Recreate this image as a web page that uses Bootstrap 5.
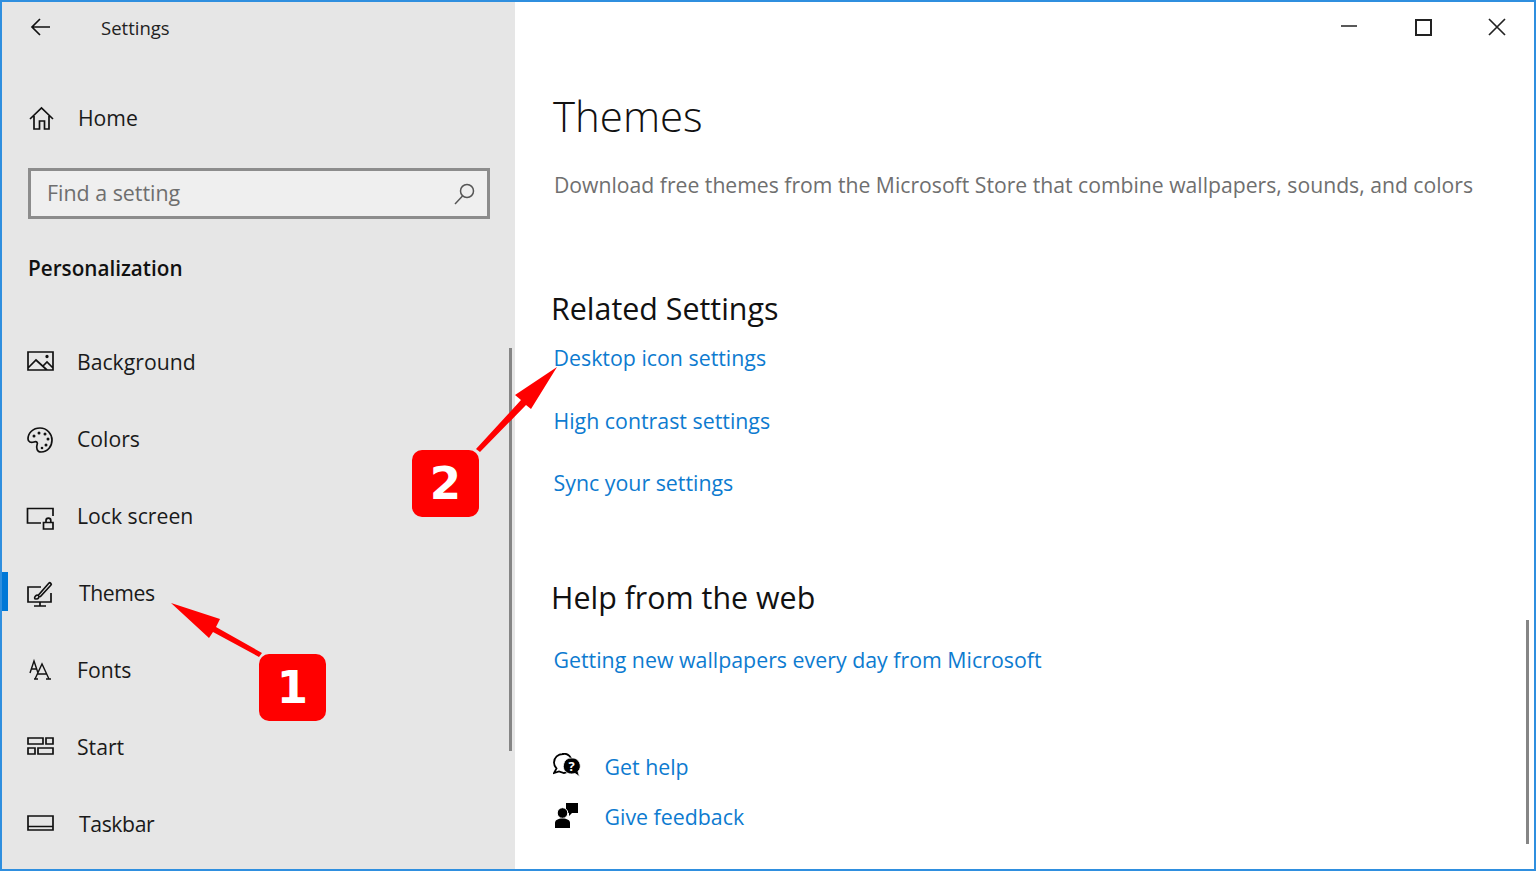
<!DOCTYPE html>
<html lang="en"><head><meta charset="utf-8"><title>Settings</title>
<link href="https://cdn.jsdelivr.net/npm/bootstrap@5.3.0/dist/css/bootstrap.min.css" rel="stylesheet">
<style>
html,body{height:871px;overflow:hidden;background:#fff}
body{font-family:"Open Sans","Noto Sans",sans-serif;color:#1a1a1a}
.win{height:871px;border:2px solid #2f8fdf;position:relative;overflow:hidden}
.side{width:513px;background:#e6e6e6;flex:none;overflow:hidden}
.titlebar{height:52px;padding-left:26px}
.titlebar span{font-size:18.5px;margin-left:45px;color:#222}
.homerow{height:77px;margin-top:26px;padding-left:26px}
.ico{width:28px;height:28px;flex:none;fill:none;stroke:#111;stroke-width:1.7}
.lbl{font-size:21.2px;margin-left:23px;margin-bottom:2px;color:#1a1a1a}
.lbl-wide{margin-left:25px;letter-spacing:-.4px}
.lbl-home{margin-left:22px}
.finder{height:51px;margin:11px 25px 0 26px;border:3px solid #8c8c8c;background:#efefef;padding:0 10px 0 16px}
.finder span{font-size:21.4px;color:#6e6e6e}
.grp{margin:29px 0 0 26px;height:40px;padding-top:2px;font-size:20.7px;font-weight:600;color:#111}
.navlist{margin-top:36px}
.navrow{height:77px;padding-left:24px;position:relative}
.navrow.on::before{content:"";position:absolute;left:-2px;top:17px;width:8px;height:39px;background:#0078d7}
.pane{min-width:0;padding-left:37px;position:relative}
.winctl{height:52px;padding-right:23px;gap:46px}
.winctl svg{width:28px;height:28px;fill:none;stroke:#222;stroke-width:2}
.pagehd{font-size:42px;font-weight:300;color:#111;height:68px;margin:28px 0 0 1px;line-height:68px}
.desc{font-size:21.18px;color:#6f6f6f;margin:19px 0 0 2px;height:32px;line-height:32px;white-space:nowrap}
.sect{font-size:30.4px;font-weight:400;color:#111;height:44px;line-height:44px;margin:0 0 0 -1px}
.lnk{display:block;font-size:21.35px;color:#0d7bd0;text-decoration:none;height:32px;line-height:32px;margin-left:1.5px}
.helprow{height:50px;margin-left:1px}
.helprow svg{width:28px;height:28px;flex:none}
.helprow .lnk{margin-left:23.5px}
.thumb{position:absolute;background:#858585;width:3px}
.tag{position:absolute;width:67px;height:67px;background:#f00;border-radius:10px;color:#fff;font-family:"DejaVu Sans",sans-serif;font-weight:700;font-size:45px;line-height:67px;text-align:center}
.marks{position:absolute;left:-2px;top:-2px;width:1536px;height:871px;pointer-events:none}
</style></head><body>
<div class="win d-flex">
<aside class="side">
 <div class="titlebar d-flex align-items-center">
  <svg class="ico" viewBox="0 0 28 28"><path d="M22 13H4M12 5l-8 8 8 8"/></svg>
  <span>Settings</span>
 </div>
 <div class="homerow d-flex align-items-center">
  <svg class="ico" viewBox="0 0 28 28"><path d="M2 14 13.500 3 25 14M6 11v13h5.500v-8h5v8H21V11"/></svg>
  <span class="lbl lbl-home">Home</span>
 </div>
 <div class="finder d-flex align-items-center justify-content-between">
  <span>Find a setting</span>
  <svg width="26" height="26" viewBox="0 0 26 26" fill="none" stroke="#555" stroke-width="1.500"><circle cx="16" cy="10" r="6.500"/><path d="M11.500 15 4 23"/></svg>
 </div>
 <div class="grp d-flex align-items-center">Personalization</div>
 <nav class="navlist">
  <div class="navrow d-flex align-items-center">
   <svg class="ico" viewBox="0 0 28 28"><path d="M2 3h25v18H2zM2 19l8-8 11 10M17 17l4-4 6 6"/><circle cx="21" cy="7.500" r=".8"/></svg>
   <span class="lbl">Background</span></div>
  <div class="navrow d-flex align-items-center">
   <svg class="ico" viewBox="0 0 28 28"><path d="M14 2C7 2 2 7 2 13c0 3 3 4 6 3 3-1 4 1 3 3-1 3 0 7 4 7 7 0 11-6 11-12S21 2 14 2Z"/><g fill="#111" stroke="none"><circle cx="8" cy="10" r="1.500"/><circle cx="13" cy="7" r="1.500"/><circle cx="19" cy="8" r="1.500"/><circle cx="22" cy="13" r="1.500"/><circle cx="20" cy="19" r="1.500"/><circle cx="16" cy="22" r="1.300"/></g></svg>
   <span class="lbl">Colors</span></div>
  <div class="navrow d-flex align-items-center">
   <svg class="ico" viewBox="0 0 28 28"><path d="M15 20H1.500V5.500H27V13M17.500 19.500H27V26h-9.500zM20 19.500v-2a2.300 2.300 0 0 1 4.800 0v2"/></svg>
   <span class="lbl">Lock screen</span></div>
  <div class="navrow on d-flex align-items-center">
   <svg class="ico" viewBox="0 0 28 28"><path d="M15 7H2v15h23V13M14 22v4M8 26h12M10 19c-2 0-1.500-2-.5-3 1-1 2-1 3-.5 1 1 .5 3.500-2.500 3.500ZM12.500 15 23 3c1-1 3 1 2 2L14 17"/></svg>
   <span class="lbl lbl-wide">Themes</span></div>
  <div class="navrow d-flex align-items-center">
   <svg class="ico" viewBox="0 0 28 28"><path d="m4 16 4-12 4 12M5.500 12h5M9 22l7-15 7 15M11.500 17h9M8 22h4M20 22h5" stroke-width="1.400"/></svg>
   <span class="lbl">Fonts</span></div>
  <div class="navrow d-flex align-items-center">
   <svg class="ico" viewBox="0 0 28 28"><path d="M2 4h15v6H2zM20 4h7v6h-7zM2 14h7v6H2zM12 14h15v6H12z"/></svg>
   <span class="lbl">Start</span></div>
  <div class="navrow d-flex align-items-center">
   <svg class="ico" viewBox="0 0 28 28"><path d="M2 5h25v14H2zM2 15.500h25"/></svg>
   <span class="lbl lbl-wide">Taskbar</span></div>
 </nav>
</aside>
<main class="pane flex-grow-1">
 <div class="winctl d-flex align-items-center justify-content-end">
  <svg viewBox="0 0 28 28"><path d="M6 12h16" stroke-width="1.500"/></svg>
  <svg viewBox="0 0 28 28"><path d="M7 6h15v15H7z"/></svg>
  <svg viewBox="0 0 28 28"><path d="m6 5 16 16M22 5 6 21" stroke-width="1.700"/></svg>
 </div>
 <h1 class="pagehd">Themes</h1>
 <p class="desc">Download free themes from the Microsoft Store that combine wallpapers, sounds, and colors</p>
 <h2 class="sect" style="margin-top:86px">Related Settings</h2>
 <a class="lnk" style="margin-top:11px" href="#">Desktop icon settings</a>
 <a class="lnk" style="margin-top:31px" href="#">High contrast settings</a>
 <a class="lnk" style="margin-top:30px" href="#">Sync your settings</a>
 <h2 class="sect" style="margin-top:77px">Help from the web</h2>
 <a class="lnk" style="margin-top:24px" href="#">Getting new wallpapers every day from Microsoft</a>
 <div class="helprow d-flex align-items-center" style="margin-top:66px">
  <svg viewBox="0 0 28 28"><path d="M10 1C5 1 1 4.500 1 9.500c0 2.500 1 4.500 2.500 6L1 20l5-1.500 5 1.500c3 0 8-4 8-11 0-5-4-8.500-9-8.500Z" fill="none" stroke="#000" stroke-width="1.800"/><path d="M18.500 5a8 8 0 0 0-4 15c2.500 1.300 5 1.200 7.500 .5l4.500 3-1.500-5A8 8 0 0 0 18.500 5Z" fill="#000" stroke="#fff" stroke-width=".8"/><text x="18.500" y="18" text-anchor="middle" fill="#fff" font-size="13" font-weight="700" font-family="Open Sans">?</text></svg>
  <a class="lnk" href="#">Get help</a>
 </div>
 <div class="helprow d-flex align-items-center">
  <svg viewBox="0 0 28 28"><path d="M13 0h12v10h-6l-3 3v-3h-3z" fill="#000"/><circle cx="9.500" cy="10" r="5.300" fill="#000" stroke="#fff" stroke-width="1"/><path d="M2 25v-5c0-3 3-4.500 7.500-4.500s7.500 1.500 7.500 4.500v5z" fill="#000"/></svg>
  <a class="lnk" href="#">Give feedback</a>
 </div>
 <div class="thumb" style="left:1011px;top:618px;height:224px"></div>
</main>
<div class="thumb" style="left:507px;top:346px;height:403px"></div>
<svg class="marks" viewBox="0 0 1536 871">
 <path fill="#f00" d="M171 603 220 619 216 627 262 653 259 657 213 632 209 638z"/>
 <path fill="#f00" d="M557 367 515 395 521 400 476 449 480 452 526 405 531 409z"/>
</svg>
<div class="tag" style="left:257px;top:652px">1</div>
<div class="tag" style="left:410px;top:448px">2</div>
</div>
</body></html>
